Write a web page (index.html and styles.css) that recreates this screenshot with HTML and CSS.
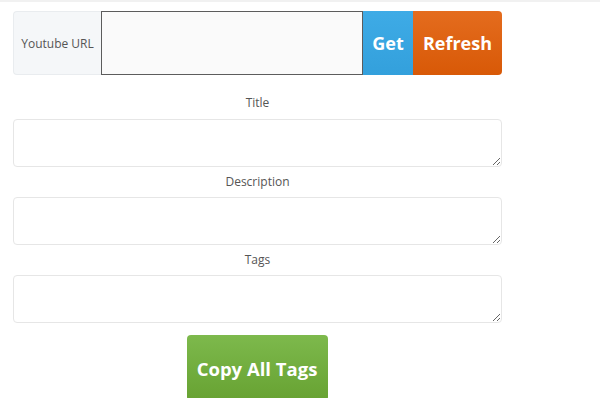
FILE: index.html
```html
<!DOCTYPE html>
<html lang="en">
<head>
    <meta charset="UTF-8">
    <meta name="viewport" content="width=device-width, initial-scale=1.0">
    <title>Youtube Tag Extractor</title>
    <link rel="stylesheet" href="styles.css">
</head>
<body>

<div class="topline"></div>

<div class="tool">
    <div class="url-group">
        <span class="url-label">Youtube URL</span>
        <input type="text" class="url-input">
        <button class="btn btn-get">Get</button>
        <button class="btn btn-refresh">Refresh</button>
    </div>

    <div class="field first">
        <label>Title</label>
        <textarea></textarea>
    </div>
    <div class="field">
        <label>Description</label>
        <textarea></textarea>
    </div>
    <div class="field">
        <label>Tags</label>
        <textarea></textarea>
    </div>

    <div class="copy-row">
        <button class="btn btn-copy">Copy All Tags</button>
    </div>
</div>

</body>
</html>
```

FILE: styles.css
```css
body {
    margin: 0;
    background: #fff;
    font-family: "Open Sans", "Noto Sans", sans-serif;
    color: #555;
}

.topline {
    height: 2px;
    background: #f1f1f1;
}

.tool {
    width: 489px;
    padding: 9px 0 0 13px;
}

.url-group {
    display: flex;
    height: 64px;
}

.url-label {
    width: 88px;
    box-sizing: border-box;
    display: flex;
    align-items: center;
    justify-content: center;
    font-size: 12px;
    color: #555;
    background: #f5f7f9;
    border: 1px solid #e9ecef;
    border-right: none;
    border-radius: 4px 0 0 4px;
}

.url-input {
    width: 262px;
    box-sizing: border-box;
    margin: 0;
    border: 1px solid #5c5c5c;
    background: #fafafa;
    outline: none;
}

.btn {
    border: none;
    margin: 0;
    color: #fff;
    font-family: "Open Sans", "Noto Sans", sans-serif;
    font-weight: bold;
    font-size: 18px;
    cursor: pointer;
}

.btn-get {
    width: 50px;
    background: linear-gradient(#3eabe6, #33a0dc);
}

.btn-refresh {
    width: 89px;
    background: linear-gradient(#e46c1e, #d85907);
    border-radius: 0 4px 4px 0;
}

.field {
    display: flex;
    flex-direction: column;
    align-items: center;
}

.field label {
    font-size: 12px;
    line-height: 18px;
    margin: 6px 0;
}

.field.first label {
    margin: 19px 0 7px;
}

.field textarea {
    width: 100%;
    height: 48px;
    box-sizing: border-box;
    border: 1px solid #e6e6e6;
    border-radius: 4px;
    resize: vertical;
    margin: 0;
}

.copy-row {
    display: flex;
    justify-content: center;
    padding-top: 12px;
    margin-left: -1px;
}

.btn-copy {
    width: 141px;
    height: 66px;
    font-size: 18.5px;
    border-radius: 4px;
    background: linear-gradient(#7db94c, #67a232);
}
```
